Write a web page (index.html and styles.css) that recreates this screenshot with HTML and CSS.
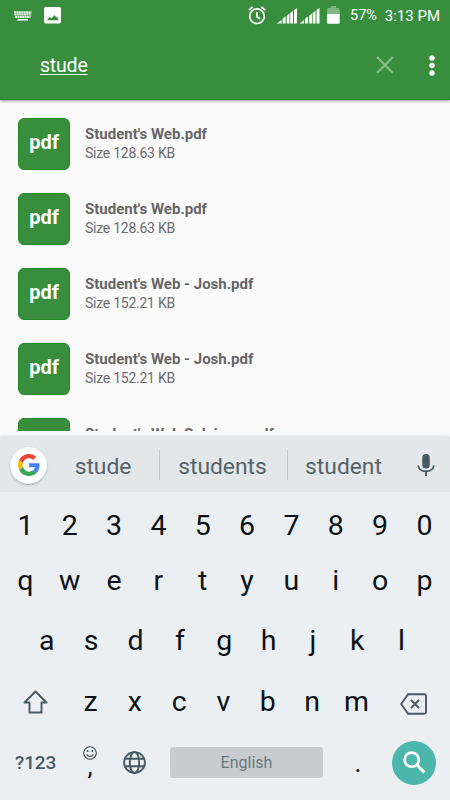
FILE: index.html
```
<!DOCTYPE html>
<html lang="en">
<head>
<meta charset="utf-8">
<title>File search</title>
<link rel="stylesheet" href="styles.css">
</head>
<body>
<div class="screen">
  <header class="appbar">
    <div class="status">
      <svg class="st-kbd" width="18" height="10" viewBox="0 0 18 10"><path d="M0 1.200h17.500M.3 3.600h17M1 6h15.500" stroke="#fff" stroke-width="2" stroke-dasharray="2.100 .3" opacity=".85"/><path d="M3.500 8.800h10.500" stroke="#fff" stroke-width="1.500"/></svg>
      <svg class="st-img" width="17" height="17" viewBox="0 0 17 17"><rect width="17" height="16.400" rx="2" fill="#fff"/><path d="M2.800 13.200l3-3.400 1.700 1.600L10.500 8l1.700 2.200.8-.7 1.600 3.700z" fill="#388e3c"/></svg>
      <svg class="st-alarm" width="18" height="19" viewBox="0 0 18 19" fill="none" stroke="#fff" stroke-width="1.700"><circle cx="9" cy="10.200" r="7.300"/><path d="M9 6v4.700l3.200 2M.8 4.200L4.600 1M17.200 4.200L13.400 1"/></svg>
      <svg class="st-sig" width="43" height="16" viewBox="0 0 43 16" fill="#fff"><path d="M0 15.500L4.600 12V15.500zM5.600 10.500L8.600 8.500v7h-3zM9.700 7.700L12.400 5.500v10H9.700zM13.200 5L16 3v12.500h-2.800zM17 2L20 0v15.500h-3z"/><path d="M22.500 15.500L27.100 12V15.500zM28.100 10.500L31.100 8.500v7h-3zM32.200 7.700L34.900 5.500v10h-2.700zM35.700 5L38.500 3v12.500h-2.800zM39.500 2L42.500 0v15.500h-3z"/></svg>
      <svg class="st-bat" width="13" height="18" viewBox="0 0 13 18"><path d="M0 3.500q0-1.500 1.500-1.500H3.700V0H9v2h2q1.700 0 1.700 1.500V9H0z" fill="#7fb982"/><path d="M0 8h12.700v8.500q0 1.300-1.300 1.300H1.300Q0 17.800 0 16.500z" fill="#fff"/></svg>
      <span class="st-text st-pct">57%</span>
      <span class="st-text">3:13 PM</span>
    </div>
    <div class="searchbar">
      <span class="query">stude</span>
      <svg class="clear" width="18" height="18" viewBox="0 0 18 18"><path d="M1 1l16 16M17 1L1 17" stroke="#85bb87" stroke-width="2.200"/></svg>
      <svg class="more" width="6" height="21" viewBox="0 0 6 21" fill="#fff"><circle cx="3" cy="3" r="2.700"/><circle cx="3" cy="10.500" r="2.700"/><circle cx="3" cy="18" r="2.700"/></svg>
    </div>
  </header>
  <main class="files">
    <div class="file"><div class="badge">pdf</div><div class="info"><div class="name">Student's Web.pdf</div><div class="size">Size 128.63 KB</div></div></div>
    <div class="file"><div class="badge">pdf</div><div class="info"><div class="name">Student's Web.pdf</div><div class="size">Size 128.63 KB</div></div></div>
    <div class="file"><div class="badge">pdf</div><div class="info"><div class="name">Student's Web - Josh.pdf</div><div class="size">Size 152.21 KB</div></div></div>
    <div class="file"><div class="badge">pdf</div><div class="info"><div class="name">Student's Web - Josh.pdf</div><div class="size">Size 152.21 KB</div></div></div>
    <div class="file"><div class="badge"></div><div class="info"><div class="name">Student's Web Sulaiman.pdf</div></div></div>
  </main>
  <section class="keyboard">
    <div class="suggest">
      <div class="google"><svg width="22" height="22" viewBox="0 0 48 48"><path fill="#EA4335" d="M24 9.500c3.540 0 6.710 1.220 9.210 3.600l6.850-6.850C35.900 2.380 30.470 0 24 0 14.620 0 6.510 5.380 2.560 13.220l7.980 6.190C12.430 13.720 17.740 9.500 24 9.500z"/><path fill="#4285F4" d="M46.980 24.550c0-1.570-.15-3.090-.38-4.550H24v9.020h12.940c-.58 2.960-2.260 5.480-4.780 7.180l7.730 6c4.510-4.180 7.090-10.360 7.090-17.650z"/><path fill="#FBBC05" d="M10.530 28.590c-.48-1.450-.76-2.990-.76-4.590s.27-3.140.76-4.590l-7.980-6.190C.92 16.460 0 20.120 0 24c0 3.880.92 7.540 2.560 10.780l7.970-6.190z"/><path fill="#34A853" d="M24 48c6.480 0 11.930-2.130 15.890-5.810l-7.730-6c-2.150 1.450-4.920 2.300-8.160 2.300-6.260 0-11.570-4.220-13.470-9.910l-7.980 6.190C6.510 42.620 14.620 48 24 48z"/></svg></div>
      <span class="word w1">stude</span><span class="word w2">students</span><span class="word w3">student</span>
      <svg class="mic" width="18" height="23" viewBox="0 0 18 23"><rect x="5.300" y="0" width="7.400" height="14.500" rx="3.500" fill="#455a64"/><path d="M1.200 11.500Q1.800 17.300 9 17.300T16.800 11.500M9 17v5" fill="none" stroke="#455a64" stroke-width="1.900"/></svg>
    </div>
    <div class="row digits"><span>1</span><span>2</span><span>3</span><span>4</span><span>5</span><span>6</span><span>7</span><span>8</span><span>9</span><span>0</span></div>
    <div class="row"><span>q</span><span>w</span><span>e</span><span>r</span><span>t</span><span>y</span><span>u</span><span>i</span><span>o</span><span>p</span></div>
    <div class="row home"><span>a</span><span>s</span><span>d</span><span>f</span><span>g</span><span>h</span><span>j</span><span>k</span><span>l</span></div>
    <div class="row third">
      <div class="wide"><svg class="shift" width="25" height="24" viewBox="0 0 25 24"><path d="M12.500 1.500L1.500 12.500H6.500V22.500H18.500V12.500H23.500z" fill="none" stroke="#455a64" stroke-width="1.900" stroke-linejoin="round"/></svg></div>
      <span>z</span><span>x</span><span>c</span><span>v</span><span>b</span><span>n</span><span>m</span>
      <div class="wide"><svg class="back" width="27" height="22" viewBox="0 0 27 22" fill="none" stroke="#455a64" stroke-width="1.900" stroke-linejoin="round"><path d="M8 1.200H24.500Q26 1.200 26 2.700V19.300Q26 20.800 24.500 20.800H8L1.200 11z"/><path d="M11 7l8 8M19 7l-8 8"/></svg></div>
    </div>
    <div class="row bottom">
      <div class="sym">?123</div>
      <div class="comma"><svg width="14" height="14" viewBox="0 0 14 14" fill="none" stroke="#37474f" stroke-width="1.100"><circle cx="7" cy="7" r="6.300"/><path d="M3.700 8.300Q7 12.500 10.300 8.300"/><path d="M4.700 4.300v1.600M9.300 4.300v1.600" stroke-width="1.600"/></svg><span>,</span></div>
      <div class="globe"><svg width="23" height="23" viewBox="0 0 23 23" fill="none" stroke="#455a64" stroke-width="1.900"><circle cx="11.500" cy="11.500" r="10.400"/><ellipse cx="11.500" cy="11.500" rx="4.700" ry="10.400"/><path d="M2 7.800h19M2 15.200h19"/></svg></div>
      <div class="space">English</div>
      <div class="dot">.</div>
      <div class="search"><svg width="23" height="23" viewBox="0 0 23 23" fill="none" stroke="#fff" stroke-width="2.600"><circle cx="8.700" cy="8.700" r="7.100"/><path d="M13.800 13.800L21.500 21.500" stroke-width="3"/></svg></div>
    </div>
  </section>
</div>
</body>
</html>
```

FILE: styles.css
```
* { box-sizing: border-box; }
body { margin: 0; font-family: Roboto, sans-serif; }
.screen { width: 450px; height: 800px; display: flex; flex-direction: column; overflow: hidden; background: #fafafa; }
svg { display: block; flex: none; }

.appbar { height: 100px; flex: none; background: #388e3c; border-bottom: 1px solid #14831b; box-shadow: 0 1px 3px rgba(0,0,0,.4); color: #fff; position: relative; }
.status { height: 31px; display: flex; align-items: center; padding: 0 10px 0 14px; }
.st-img { margin-left: 12px; }
.st-alarm { margin-left: 187px; }
.st-sig { margin-left: 11px; }
.st-bat { margin-left: 7px; margin-top: -1px; }
.st-text { font-size: 15px; line-height: 32px; white-space: nowrap; margin-left: auto; }
.st-pct { margin-left: 10px; font-size: 14.500px; }
.searchbar { height: 68px; display: flex; align-items: center; padding: 0 15px 0 40px; }
.query { font-size: 19.500px; letter-spacing: -.2px; line-height: 24px; padding-top: 2px; text-decoration: underline; text-decoration-thickness: 1px; text-underline-offset: 2px; }
.clear { margin-left: auto; margin-right: 35px; }

.files { height: 331px; flex: none; padding-top: 18px; overflow: hidden; }
.file { height: 75px; display: flex; padding-left: 18px; }
.badge { width: 52px; height: 52px; border-radius: 6px; background: #388e3c; border: 1px solid #218a27; color: #fff; font-weight: 700; font-size: 20px; line-height: 47px; text-align: center; }
.info { margin-left: 15px; padding-top: 6px; color: #666; white-space: nowrap; }
.name { font-weight: 700; font-size: 15px; line-height: 20px; }
.size { font-size: 14px; letter-spacing: -.25px; line-height: 19px; color: #6c6c6c; }

.keyboard { margin-top: 6px; height: 363px; flex: none; background: #eceff1; box-shadow: 0 -1px 3px rgba(0,0,0,.12); }
.suggest { height: 55px; background: #e4e7e9; display: flex; align-items: center; padding-left: 10px; padding-top: 1px; }
.google { width: 37px; height: 37px; border-radius: 50%; background: #fff; display: flex; align-items: center; justify-content: center; box-shadow: 0 1px 2px rgba(0,0,0,.3); }
.word { font-size: 22.800px; line-height: 33px; height: 30px; color: #546369; text-align: center; }
.w1 { width: 113px; border-right: 1px solid #c5c9cb; }
.w2 { width: 128px; border-right: 1px solid #c5c9cb; padding-right: 2px; }
.w3 { width: 111px; }
.mic { margin-left: 18px; }

.row { display: flex; padding: 0 3.300px; height: 55px; line-height: 55px; font-size: 28.500px; color: #0a1217; text-align: center; }
.row > span { width: 44.340px; flex: none; }
.digits { margin-top: 6px; }
.home { height: 60px; line-height: 60px; margin-top: 3px; padding-left: 24.700px; }
.third { height: 61px; line-height: 61px; }
.wide { width: 65px; flex: none; display: flex; align-items: center; justify-content: center; }
.third .wide:last-child { width: 69px; padding-top: 5px; }
.bottom { height: 61px; line-height: 61px; align-items: center; padding: 0 14px 0 15px; color: #455a64; }
.sym { width: 41px; font-size: 19px; font-weight: 500; letter-spacing: -.1px; white-space: nowrap; }
.comma { width: 28px; height: 61px; margin-left: 20px; display: flex; flex-direction: column; align-items: center; padding-top: 14px; }
.comma span { font-size: 26px; line-height: 20px; color: #0a1217; margin-top: -4px; }
.globe { margin-left: 19px; }
.space { width: 153px; height: 31px; margin-left: 24px; border-radius: 3px; background: #c8cccf; font-size: 16px; line-height: 32px; color: #69767c; }
.dot { width: 20px; margin-left: 25px; font-size: 28px; color: #0a1217; }
.search { width: 44px; height: 44px; margin-left: 24px; border-radius: 50%; background: #4db6ac; display: flex; align-items: center; justify-content: center; flex: none; }
```
